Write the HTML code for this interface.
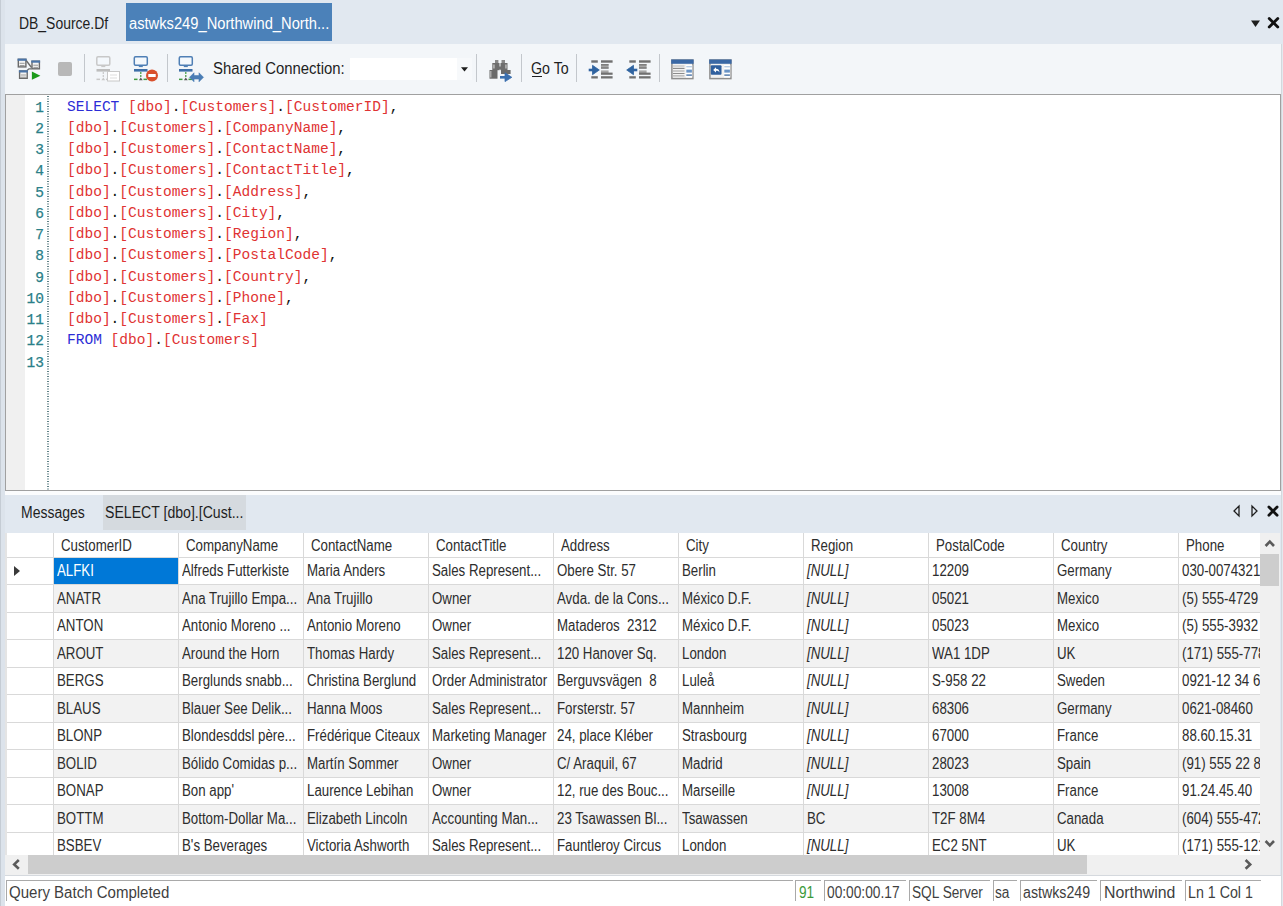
<!DOCTYPE html><html><head><meta charset="utf-8"><style>
*{box-sizing:border-box}
html,body{margin:0;padding:0}
body{width:1283px;height:906px;position:relative;overflow:hidden;background:#E1E8F0;font-family:"Liberation Sans",sans-serif;color:#1E1E1E}
.a{position:absolute}
.t{position:absolute;white-space:nowrap;transform-origin:0 0;line-height:1}
.ln{position:absolute;left:14px;width:30px;text-align:right;font-family:"Liberation Mono",monospace;font-size:14.5px;color:#2A8088;line-height:21.25px;-webkit-text-stroke:0.25px #2A8088}
.code{position:absolute;left:67px;font-family:"Liberation Mono",monospace;font-size:15.5px;color:#DF3333;line-height:21.25px;white-space:pre;transform:scaleX(0.9375);transform-origin:0 0}
.kw{color:#2C2CD6}
.pu{color:#111}
.sep{position:absolute;top:54px;width:1px;height:28px;background:#C3C7CC}
.gt{position:absolute;font-size:16px;line-height:1;white-space:pre;transform-origin:0 0;color:#2D2D2D}
.hl{position:absolute;background:#D9D9D9}
.sb{position:absolute;top:880px;height:21px;border-top:1px solid #A9A9A9;border-left:1px solid #A9A9A9}
.st{position:absolute;font-size:16px;line-height:1;white-space:nowrap;transform-origin:0 0;color:#2A2A2A}
</style></head><body>
<div class="a" style="left:0;top:0;width:1px;height:906px;background:#C5CCD4"></div>
<div class="a" style="left:1px;top:0;width:4px;height:906px;background:#DCE3EB"></div>
<div class="t" style="left:19px;top:16px;font-size:16px;transform:scaleX(0.871)">DB_Source.Df</div>
<div class="a" style="left:126px;top:3px;width:206px;height:38px;background:#4B81B9"></div>
<div class="t" style="left:128.6px;top:16px;font-size:16px;color:#fff;transform:scaleX(0.919)">astwks249_Northwind_North...</div>
<svg class="a" style="left:1248px;top:14px" width="35" height="18" viewBox="0 0 35 18"><path d="M3 6.5 L12 6.5 L7.5 13 Z" fill="#1E1E1E"/><path d="M21.2 4.4 L29.8 13" stroke="#111" stroke-width="2.8" stroke-linecap="round"/><path d="M29.8 4.4 L21.2 13" stroke="#111" stroke-width="2.8" stroke-linecap="round"/></svg>
<div class="a" style="left:5px;top:44px;width:1276px;height:50px;background:#F3F6F9"></div>
<div class="a" style="left:1281px;top:44px;width:1px;height:862px;background:#D3D8DD"></div><div class="a" style="left:1282px;top:44px;width:1px;height:862px;background:#E4E9EE"></div>
<svg class="a" style="left:16px;top:57px" width="26" height="24" viewBox="0 0 26 24"><path d="M10.2 3.5 L15.5 10.5" stroke="#6A6A6A" stroke-width="1.3"/><path d="M11 13.5 L13 11.8 L15.5 11.8" stroke="#6A6A6A" stroke-width="1.3" fill="none"/><rect x="2.3" y="2.3" width="7.6" height="7.6" fill="#F4F4F4" stroke="#6A6A6A" stroke-width="1.4"/><rect x="1.6" y="1.6" width="9" height="2.2" fill="#4A74A8"/><rect x="3.6" y="5.8" width="5" height="1" fill="#9A9A9A"/><rect x="3.6" y="8" width="5" height="1" fill="#9A9A9A"/><rect x="16" y="4.2" width="7.4" height="7.6" fill="#F4F4F4" stroke="#6A6A6A" stroke-width="1.4"/><rect x="15.3" y="3.5" width="8.8" height="2.2" fill="#4A74A8"/><rect x="17.3" y="7.7" width="4.8" height="1" fill="#9A9A9A"/><rect x="17.3" y="9.9" width="4.8" height="1" fill="#9A9A9A"/><rect x="3.6" y="14" width="7.6" height="7.3" fill="#F4F4F4" stroke="#6A6A6A" stroke-width="1.4"/><rect x="2.9" y="13.3" width="9" height="2.2" fill="#4A74A8"/><rect x="4.9" y="17.5" width="5" height="1" fill="#9A9A9A"/><rect x="4.9" y="19.7" width="5" height="1" fill="#9A9A9A"/><path d="M15.9 14.6 L24.4 18.7 L15.9 22.8 Z" fill="#1A9A1A"/></svg>
<div class="a" style="left:58px;top:61.5px;width:14px;height:14.5px;background:#B8B8B8;border-radius:2px"></div>
<div class="sep" style="left:84px"></div>
<svg class="a" style="left:95px;top:56px" width="28" height="27" viewBox="0 0 28 27"><rect x="1.8" y="0.8" width="13" height="8.4" rx="1.2" fill="#F4F8FC" stroke="#C8C8C8" stroke-width="1.5"/><rect x="6.3" y="9.6" width="4" height="1.5" fill="#C8C8C8"/><rect x="1.5" y="13" width="13.5" height="2.6" fill="#BDBDBD"/><rect x="7.7" y="16" width="1.2" height="2" fill="#C8C8C8"/><rect x="7.7" y="19" width="1.2" height="2" fill="#C8C8C8"/><rect x="1.5" y="22.6" width="3.5" height="1.5" fill="#C8C8C8"/><rect x="11" y="22.6" width="3.5" height="1.5" fill="#C8C8C8"/><path d="M6.4 24.2 L8.3 21.4 L10.2 24.2 Z" fill="#C8C8C8"/><rect x="12.5" y="15.5" width="12" height="9.5" fill="#fff" stroke="#C8C8C8"/><line x1="15" y1="19" x2="22" y2="19" stroke="#ddd"/><line x1="15" y1="22" x2="22" y2="22" stroke="#ddd"/></svg>
<svg class="a" style="left:133px;top:56px" width="28" height="27" viewBox="0 0 28 27"><rect x="1.3" y="0.8" width="13" height="8.4" rx="1.2" fill="#F4F8FC" stroke="#4F7FB5" stroke-width="1.5"/><rect x="5.8" y="9.6" width="4" height="1.5" fill="#4F7FB5"/><rect x="1" y="13" width="13.5" height="2.6" fill="#3E6FA8"/><rect x="7.2" y="16" width="1.2" height="2" fill="#3F9B3F"/><rect x="7.2" y="19" width="1.2" height="2" fill="#3F9B3F"/><rect x="1" y="22.6" width="3.5" height="1.5" fill="#3F9B3F"/><rect x="10.5" y="22.6" width="3.5" height="1.5" fill="#3F9B3F"/><path d="M5.9 24.2 L7.8 21.4 L9.7 24.2 Z" fill="#555"/><circle cx="19" cy="19.5" r="6" fill="#D9502C"/><rect x="15.3" y="18" width="7.4" height="3" fill="#fff"/></svg>
<div class="sep" style="left:167px"></div>
<svg class="a" style="left:178px;top:56px" width="28" height="27" viewBox="0 0 28 27"><rect x="1.3" y="0.8" width="13" height="8.4" rx="1.2" fill="#F4F8FC" stroke="#4F7FB5" stroke-width="1.5"/><rect x="5.8" y="9.6" width="4" height="1.5" fill="#4F7FB5"/><rect x="1" y="13" width="13.5" height="2.6" fill="#3E6FA8"/><rect x="7.2" y="16" width="1.2" height="2" fill="#3F9B3F"/><rect x="7.2" y="19" width="1.2" height="2" fill="#3F9B3F"/><rect x="1" y="22.6" width="3.5" height="1.5" fill="#3F9B3F"/><rect x="10.5" y="22.6" width="3.5" height="1.5" fill="#3F9B3F"/><path d="M5.9 24.2 L7.8 21.4 L9.7 24.2 Z" fill="#555"/><path d="M11.5 21.3 L16 16.8 L16 19.6 L21 19.6 L21 16.8 L25.5 21.3 L21 25.8 L21 23 L16 23 L16 25.8 Z" fill="#4A7DB5" stroke="#4A7DB5" stroke-width="0.6" stroke-linejoin="round"/></svg>
<div class="t" style="left:213px;top:61px;font-size:16px;transform:scaleX(0.931)">Shared Connection:</div>
<div class="a" style="left:350px;top:58px;width:122px;height:22px;background:#fff"></div>
<div class="a" style="left:457px;top:58px;width:15px;height:22px;background:#F7F9FB"></div>
<svg class="a" style="left:460px;top:66px" width="9" height="7"><path d="M1 1.3 L8 1.3 L4.5 5.5 Z" fill="#1E1E1E"/></svg>
<div class="sep" style="left:476px"></div>
<svg class="a" style="left:488px;top:59px" width="26" height="24" viewBox="0 0 26 24"><rect x="7" y="1" width="3.4" height="3.2" fill="#888"/><rect x="13.5" y="1" width="3.5" height="3.2" fill="#888"/><rect x="4.3" y="4" width="7.2" height="7.2" fill="#6E6E6E"/><rect x="12.5" y="4" width="7" height="7.2" fill="#6E6E6E"/><rect x="5.3" y="5.5" width="1.3" height="4" fill="#C8C8C8"/><rect x="17.3" y="5.5" width="1.3" height="4" fill="#C8C8C8"/><rect x="9.5" y="7.5" width="4" height="3" fill="#6E6E6E"/><rect x="1.5" y="11" width="8" height="8.7" fill="#6A6A6A"/><rect x="2.2" y="12" width="1.2" height="6.5" fill="#B8B8B8"/><rect x="13" y="11" width="9.6" height="4" fill="#6A6A6A"/><rect x="12" y="17" width="6.5" height="2.6" fill="#3B6FAE"/><path d="M17 13.8 L23.8 18.3 L17 22.6 Z" fill="#3B6FAE" stroke="#3B6FAE" stroke-width="0.8" stroke-linejoin="round"/></svg>
<div class="sep" style="left:521px"></div>
<div class="t" style="left:530.7px;top:61px;font-size:16px;transform:scaleX(0.89)">Go To</div>
<div class="a" style="left:531.5px;top:75.5px;width:10px;height:1.2px;background:#1E1E1E"></div>
<div class="sep" style="left:576px"></div>
<svg class="a" style="left:588px;top:59px" width="26" height="21" viewBox="0 0 26 21"><rect x="3.3" y="1.3" width="6.5" height="2.4" fill="#707070"/><rect x="3.3" y="17.2" width="6.5" height="2.3" fill="#707070"/><rect x="13" y="1.3" width="11.6" height="2.4" fill="#707070"/><rect x="13" y="5.2" width="7.6" height="4.4" fill="#A6A6A6"/><rect x="13" y="5.2" width="7.6" height="1.2" fill="#707070"/><rect x="13" y="8.4" width="7.6" height="1.2" fill="#707070"/><rect x="13" y="11.4" width="7.6" height="3" fill="#A6A6A6"/><rect x="13" y="13.6" width="11.6" height="2.2" fill="#707070"/><rect x="13" y="17.2" width="11.6" height="2.3" fill="#707070"/><path d="M0.7 11 L6 11" stroke="#2F63A0" stroke-width="2.6"/><path d="M4.5 6.3 L11.3 11 L4.5 15.7 Z" fill="#2F63A0" stroke="#2F63A0" stroke-width="0.8" stroke-linejoin="round"/></svg>
<svg class="a" style="left:626px;top:59px" width="26" height="21" viewBox="0 0 26 21"><rect x="3.3" y="1.3" width="6.5" height="2.4" fill="#707070"/><rect x="3.3" y="17.2" width="6.5" height="2.3" fill="#707070"/><rect x="13" y="1.3" width="11.6" height="2.4" fill="#707070"/><rect x="13" y="5.2" width="7.6" height="4.4" fill="#A6A6A6"/><rect x="13" y="5.2" width="7.6" height="1.2" fill="#707070"/><rect x="13" y="8.4" width="7.6" height="1.2" fill="#707070"/><rect x="13" y="11.4" width="7.6" height="3" fill="#A6A6A6"/><rect x="13" y="13.6" width="11.6" height="2.2" fill="#707070"/><rect x="13" y="17.2" width="11.6" height="2.3" fill="#707070"/><path d="M11.3 11 L6 11" stroke="#2F63A0" stroke-width="2.6"/><path d="M7.5 6.3 L0.7 11 L7.5 15.7 Z" fill="#2F63A0" stroke="#2F63A0" stroke-width="0.8" stroke-linejoin="round"/></svg>
<div class="sep" style="left:659px"></div>
<svg class="a" style="left:671px;top:59px" width="24" height="21" viewBox="0 0 24 21"><rect x="0.9" y="1" width="21" height="18.6" fill="#F2F2F2" stroke="#8E8E8E" stroke-width="1.5"/><rect x="0.2" y="0.5" width="22.4" height="4.3" fill="#3A68A5"/><rect x="15" y="6" width="6.3" height="12.5" fill="#FFFFFF"/><rect x="15.3" y="7" width="5.6" height="1.4" fill="#B7CCE4"/><rect x="15.3" y="10.6" width="5.6" height="3" fill="#6A94C6"/><rect x="15.3" y="15.4" width="5.6" height="1.4" fill="#4A74A8"/><rect x="2" y="6" width="11.5" height="2.6" fill="#D6D6D6"/><rect x="2" y="9" width="11.5" height="1" fill="#8C8C8C"/><rect x="2" y="11.5" width="11.5" height="1" fill="#A0A0A0"/><rect x="2" y="14" width="11.5" height="1" fill="#8C8C8C"/><rect x="2" y="16.4" width="11.5" height="1" fill="#A0A0A0"/></svg>
<svg class="a" style="left:709px;top:59px" width="24" height="21" viewBox="0 0 24 21"><rect x="0.9" y="1" width="21" height="18.6" fill="#F2F2F2" stroke="#8E8E8E" stroke-width="1.5"/><rect x="0.2" y="0.5" width="22.4" height="4.3" fill="#3A68A5"/><rect x="15" y="6" width="6.3" height="12.5" fill="#FFFFFF"/><rect x="15.3" y="7" width="5.6" height="1.4" fill="#B7CCE4"/><rect x="15.3" y="10.6" width="5.6" height="3" fill="#6A94C6"/><rect x="15.3" y="15.4" width="5.6" height="1.4" fill="#4A74A8"/><rect x="1.8" y="6.2" width="10.7" height="9.6" rx="1" fill="#2F5F9E"/><path d="M4.2 11 L7 8.2 L7 9.8 C9 9.8 10.3 10.8 10.5 13.5 C9.8 12.2 8.8 11.8 7 11.8 L7 13.6 Z" fill="#fff"/></svg>
<div class="a" style="left:5px;top:94px;width:1276px;height:397px;background:#fff;border:1px solid #A0A0A0"></div>
<div class="a" style="left:6px;top:95px;width:19px;height:395px;background:#F0F0F0"></div>
<div class="a" style="left:47px;top:96px;width:2px;height:394px;background-image:linear-gradient(#5F7F84 0,#5F7F84 1.5px,transparent 1.5px,transparent 2.5px,#B9C9CC 2.5px,#B9C9CC 4px,transparent 4px);background-size:2px 5px"></div>
<div class="ln" style="top:97.50px">1</div>
<div class="ln" style="top:118.75px">2</div>
<div class="ln" style="top:140.00px">3</div>
<div class="ln" style="top:161.25px">4</div>
<div class="ln" style="top:182.50px">5</div>
<div class="ln" style="top:203.75px">6</div>
<div class="ln" style="top:225.00px">7</div>
<div class="ln" style="top:246.25px">8</div>
<div class="ln" style="top:267.50px">9</div>
<div class="ln" style="top:288.75px">10</div>
<div class="ln" style="top:310.00px">11</div>
<div class="ln" style="top:331.25px">12</div>
<div class="ln" style="top:352.50px">13</div>
<div class="code" style="top:96.50px"><span class="kw">SELECT </span>[dbo]<span class="pu">.</span>[Customers]<span class="pu">.</span>[CustomerID]<span class="pu">,</span></div>
<div class="code" style="top:117.75px">[dbo]<span class="pu">.</span>[Customers]<span class="pu">.</span>[CompanyName]<span class="pu">,</span></div>
<div class="code" style="top:139.00px">[dbo]<span class="pu">.</span>[Customers]<span class="pu">.</span>[ContactName]<span class="pu">,</span></div>
<div class="code" style="top:160.25px">[dbo]<span class="pu">.</span>[Customers]<span class="pu">.</span>[ContactTitle]<span class="pu">,</span></div>
<div class="code" style="top:181.50px">[dbo]<span class="pu">.</span>[Customers]<span class="pu">.</span>[Address]<span class="pu">,</span></div>
<div class="code" style="top:202.75px">[dbo]<span class="pu">.</span>[Customers]<span class="pu">.</span>[City]<span class="pu">,</span></div>
<div class="code" style="top:224.00px">[dbo]<span class="pu">.</span>[Customers]<span class="pu">.</span>[Region]<span class="pu">,</span></div>
<div class="code" style="top:245.25px">[dbo]<span class="pu">.</span>[Customers]<span class="pu">.</span>[PostalCode]<span class="pu">,</span></div>
<div class="code" style="top:266.50px">[dbo]<span class="pu">.</span>[Customers]<span class="pu">.</span>[Country]<span class="pu">,</span></div>
<div class="code" style="top:287.75px">[dbo]<span class="pu">.</span>[Customers]<span class="pu">.</span>[Phone]<span class="pu">,</span></div>
<div class="code" style="top:309.00px">[dbo]<span class="pu">.</span>[Customers]<span class="pu">.</span>[Fax]</div>
<div class="code" style="top:330.25px"><span class="kw">FROM </span>[dbo]<span class="pu">.</span>[Customers]</div>
<div class="a" style="left:5px;top:491px;width:1276px;height:4px;background:#FBFCFD"></div>
<div class="a" style="left:5px;top:495px;width:1276px;height:38px;background:#E1E8F0"></div>
<div class="t" style="left:21px;top:505px;font-size:16px;transform:scaleX(0.875)">Messages</div>
<div class="a" style="left:103px;top:495px;width:143px;height:35px;background:#D5DADF"></div>
<div class="t" style="left:104.6px;top:505px;font-size:16px;transform:scaleX(0.881)">SELECT [dbo].[Cust...</div>
<svg class="a" style="left:1230px;top:503px" width="53" height="16" viewBox="0 0 53 16"><path d="M9 3 L9 13 L4 8 Z" fill="none" stroke="#1E1E1E" stroke-width="1.3"/><path d="M22 3 L22 13 L27 8 Z" fill="none" stroke="#1E1E1E" stroke-width="1.3"/><path d="M38.9 4 L47.1 12.2" stroke="#111" stroke-width="2.8" stroke-linecap="round"/><path d="M47.1 4 L38.9 12.2" stroke="#111" stroke-width="2.8" stroke-linecap="round"/></svg>
<div class="a" style="left:5px;top:533px;width:2px;height:322px;background:#E4E4E4"></div>
<div class="a" style="left:7px;top:533px;width:1253px;height:322px;background:#fff;overflow:hidden">
<div class="a" style="left:46px;top:51.50px;width:1207px;height:27.50px;background:#F2F2F2"></div>
<div class="a" style="left:46px;top:106.50px;width:1207px;height:27.50px;background:#F2F2F2"></div>
<div class="a" style="left:46px;top:161.50px;width:1207px;height:27.50px;background:#F2F2F2"></div>
<div class="a" style="left:46px;top:216.50px;width:1207px;height:27.50px;background:#F2F2F2"></div>
<div class="a" style="left:46px;top:271.50px;width:1207px;height:27.50px;background:#F2F2F2"></div>
<div class="a" style="left:47px;top:25.00px;width:124px;height:26.50px;background:#0078D7"></div>
<div class="hl" style="left:0;top:23.50px;width:1253px;height:1px"></div>
<div class="hl" style="left:0;top:51.00px;width:1253px;height:1px"></div>
<div class="hl" style="left:0;top:78.50px;width:1253px;height:1px"></div>
<div class="hl" style="left:0;top:106.00px;width:1253px;height:1px"></div>
<div class="hl" style="left:0;top:133.50px;width:1253px;height:1px"></div>
<div class="hl" style="left:0;top:161.00px;width:1253px;height:1px"></div>
<div class="hl" style="left:0;top:188.50px;width:1253px;height:1px"></div>
<div class="hl" style="left:0;top:216.00px;width:1253px;height:1px"></div>
<div class="hl" style="left:0;top:243.50px;width:1253px;height:1px"></div>
<div class="hl" style="left:0;top:271.00px;width:1253px;height:1px"></div>
<div class="hl" style="left:0;top:298.50px;width:1253px;height:1px"></div>
<div class="hl" style="left:0;top:326.00px;width:1253px;height:1px"></div>
<div class="hl" style="left:46px;top:0;width:1px;height:322px"></div>
<div class="hl" style="left:171px;top:0;width:1px;height:322px"></div>
<div class="hl" style="left:296px;top:0;width:1px;height:322px"></div>
<div class="hl" style="left:421px;top:0;width:1px;height:322px"></div>
<div class="hl" style="left:546px;top:0;width:1px;height:322px"></div>
<div class="hl" style="left:671px;top:0;width:1px;height:322px"></div>
<div class="hl" style="left:796px;top:0;width:1px;height:322px"></div>
<div class="hl" style="left:921px;top:0;width:1px;height:322px"></div>
<div class="hl" style="left:1046px;top:0;width:1px;height:322px"></div>
<div class="hl" style="left:1171px;top:0;width:1px;height:322px"></div>
<div class="gt" style="left:54px;top:4.6px;transform:scaleX(0.830)">CustomerID</div>
<div class="gt" style="left:179px;top:4.6px;transform:scaleX(0.830)">CompanyName</div>
<div class="gt" style="left:304px;top:4.6px;transform:scaleX(0.830)">ContactName</div>
<div class="gt" style="left:429px;top:4.6px;transform:scaleX(0.830)">ContactTitle</div>
<div class="gt" style="left:554px;top:4.6px;transform:scaleX(0.830)">Address</div>
<div class="gt" style="left:679px;top:4.6px;transform:scaleX(0.830)">City</div>
<div class="gt" style="left:804px;top:4.6px;transform:scaleX(0.830)">Region</div>
<div class="gt" style="left:929px;top:4.6px;transform:scaleX(0.830)">PostalCode</div>
<div class="gt" style="left:1054px;top:4.6px;transform:scaleX(0.830)">Country</div>
<div class="gt" style="left:1179px;top:4.6px;transform:scaleX(0.830)">Phone</div>
<div class="gt" style="left:50.3px;top:30.30px;transform:scaleX(0.830);color:#fff;">ALFKI</div>
<div class="gt" style="left:175.3px;top:30.30px;transform:scaleX(0.830);color:#2D2D2D;">Alfreds Futterkiste</div>
<div class="gt" style="left:300.3px;top:30.30px;transform:scaleX(0.830);color:#2D2D2D;">Maria Anders</div>
<div class="gt" style="left:425.3px;top:30.30px;transform:scaleX(0.830);color:#2D2D2D;">Sales Represent...</div>
<div class="gt" style="left:550.3px;top:30.30px;transform:scaleX(0.830);color:#2D2D2D;">Obere Str. 57</div>
<div class="gt" style="left:675.3px;top:30.30px;transform:scaleX(0.830);color:#2D2D2D;">Berlin</div>
<div class="gt" style="left:800.3px;top:30.30px;transform:scaleX(0.830);color:#2D2D2D;font-style:italic;">[NULL]</div>
<div class="gt" style="left:925.3px;top:30.30px;transform:scaleX(0.830);color:#2D2D2D;">12209</div>
<div class="gt" style="left:1050.3px;top:30.30px;transform:scaleX(0.830);color:#2D2D2D;">Germany</div>
<div class="gt" style="left:1175.3px;top:30.30px;transform:scaleX(0.830);color:#2D2D2D;">030-0074321</div>
<div class="gt" style="left:50.3px;top:57.80px;transform:scaleX(0.830);color:#2D2D2D;">ANATR</div>
<div class="gt" style="left:175.3px;top:57.80px;transform:scaleX(0.830);color:#2D2D2D;">Ana Trujillo Empa...</div>
<div class="gt" style="left:300.3px;top:57.80px;transform:scaleX(0.830);color:#2D2D2D;">Ana Trujillo</div>
<div class="gt" style="left:425.3px;top:57.80px;transform:scaleX(0.830);color:#2D2D2D;">Owner</div>
<div class="gt" style="left:550.3px;top:57.80px;transform:scaleX(0.830);color:#2D2D2D;">Avda. de la Cons...</div>
<div class="gt" style="left:675.3px;top:57.80px;transform:scaleX(0.830);color:#2D2D2D;">México D.F.</div>
<div class="gt" style="left:800.3px;top:57.80px;transform:scaleX(0.830);color:#2D2D2D;font-style:italic;">[NULL]</div>
<div class="gt" style="left:925.3px;top:57.80px;transform:scaleX(0.830);color:#2D2D2D;">05021</div>
<div class="gt" style="left:1050.3px;top:57.80px;transform:scaleX(0.830);color:#2D2D2D;">Mexico</div>
<div class="gt" style="left:1175.3px;top:57.80px;transform:scaleX(0.830);color:#2D2D2D;">(5) 555-4729</div>
<div class="gt" style="left:50.3px;top:85.30px;transform:scaleX(0.830);color:#2D2D2D;">ANTON</div>
<div class="gt" style="left:175.3px;top:85.30px;transform:scaleX(0.830);color:#2D2D2D;">Antonio Moreno ...</div>
<div class="gt" style="left:300.3px;top:85.30px;transform:scaleX(0.830);color:#2D2D2D;">Antonio Moreno</div>
<div class="gt" style="left:425.3px;top:85.30px;transform:scaleX(0.830);color:#2D2D2D;">Owner</div>
<div class="gt" style="left:550.3px;top:85.30px;transform:scaleX(0.830);color:#2D2D2D;">Mataderos  2312</div>
<div class="gt" style="left:675.3px;top:85.30px;transform:scaleX(0.830);color:#2D2D2D;">México D.F.</div>
<div class="gt" style="left:800.3px;top:85.30px;transform:scaleX(0.830);color:#2D2D2D;font-style:italic;">[NULL]</div>
<div class="gt" style="left:925.3px;top:85.30px;transform:scaleX(0.830);color:#2D2D2D;">05023</div>
<div class="gt" style="left:1050.3px;top:85.30px;transform:scaleX(0.830);color:#2D2D2D;">Mexico</div>
<div class="gt" style="left:1175.3px;top:85.30px;transform:scaleX(0.830);color:#2D2D2D;">(5) 555-3932</div>
<div class="gt" style="left:50.3px;top:112.80px;transform:scaleX(0.830);color:#2D2D2D;">AROUT</div>
<div class="gt" style="left:175.3px;top:112.80px;transform:scaleX(0.830);color:#2D2D2D;">Around the Horn</div>
<div class="gt" style="left:300.3px;top:112.80px;transform:scaleX(0.830);color:#2D2D2D;">Thomas Hardy</div>
<div class="gt" style="left:425.3px;top:112.80px;transform:scaleX(0.830);color:#2D2D2D;">Sales Represent...</div>
<div class="gt" style="left:550.3px;top:112.80px;transform:scaleX(0.830);color:#2D2D2D;">120 Hanover Sq.</div>
<div class="gt" style="left:675.3px;top:112.80px;transform:scaleX(0.830);color:#2D2D2D;">London</div>
<div class="gt" style="left:800.3px;top:112.80px;transform:scaleX(0.830);color:#2D2D2D;font-style:italic;">[NULL]</div>
<div class="gt" style="left:925.3px;top:112.80px;transform:scaleX(0.830);color:#2D2D2D;">WA1 1DP</div>
<div class="gt" style="left:1050.3px;top:112.80px;transform:scaleX(0.830);color:#2D2D2D;">UK</div>
<div class="gt" style="left:1175.3px;top:112.80px;transform:scaleX(0.830);color:#2D2D2D;">(171) 555-7788</div>
<div class="gt" style="left:50.3px;top:140.30px;transform:scaleX(0.830);color:#2D2D2D;">BERGS</div>
<div class="gt" style="left:175.3px;top:140.30px;transform:scaleX(0.830);color:#2D2D2D;">Berglunds snabb...</div>
<div class="gt" style="left:300.3px;top:140.30px;transform:scaleX(0.830);color:#2D2D2D;">Christina Berglund</div>
<div class="gt" style="left:425.3px;top:140.30px;transform:scaleX(0.830);color:#2D2D2D;">Order Administrator</div>
<div class="gt" style="left:550.3px;top:140.30px;transform:scaleX(0.830);color:#2D2D2D;">Berguvsvägen  8</div>
<div class="gt" style="left:675.3px;top:140.30px;transform:scaleX(0.830);color:#2D2D2D;">Luleå</div>
<div class="gt" style="left:800.3px;top:140.30px;transform:scaleX(0.830);color:#2D2D2D;font-style:italic;">[NULL]</div>
<div class="gt" style="left:925.3px;top:140.30px;transform:scaleX(0.830);color:#2D2D2D;">S-958 22</div>
<div class="gt" style="left:1050.3px;top:140.30px;transform:scaleX(0.830);color:#2D2D2D;">Sweden</div>
<div class="gt" style="left:1175.3px;top:140.30px;transform:scaleX(0.830);color:#2D2D2D;">0921-12 34 65</div>
<div class="gt" style="left:50.3px;top:167.80px;transform:scaleX(0.830);color:#2D2D2D;">BLAUS</div>
<div class="gt" style="left:175.3px;top:167.80px;transform:scaleX(0.830);color:#2D2D2D;">Blauer See Delik...</div>
<div class="gt" style="left:300.3px;top:167.80px;transform:scaleX(0.830);color:#2D2D2D;">Hanna Moos</div>
<div class="gt" style="left:425.3px;top:167.80px;transform:scaleX(0.830);color:#2D2D2D;">Sales Represent...</div>
<div class="gt" style="left:550.3px;top:167.80px;transform:scaleX(0.830);color:#2D2D2D;">Forsterstr. 57</div>
<div class="gt" style="left:675.3px;top:167.80px;transform:scaleX(0.830);color:#2D2D2D;">Mannheim</div>
<div class="gt" style="left:800.3px;top:167.80px;transform:scaleX(0.830);color:#2D2D2D;font-style:italic;">[NULL]</div>
<div class="gt" style="left:925.3px;top:167.80px;transform:scaleX(0.830);color:#2D2D2D;">68306</div>
<div class="gt" style="left:1050.3px;top:167.80px;transform:scaleX(0.830);color:#2D2D2D;">Germany</div>
<div class="gt" style="left:1175.3px;top:167.80px;transform:scaleX(0.830);color:#2D2D2D;">0621-08460</div>
<div class="gt" style="left:50.3px;top:195.30px;transform:scaleX(0.830);color:#2D2D2D;">BLONP</div>
<div class="gt" style="left:175.3px;top:195.30px;transform:scaleX(0.830);color:#2D2D2D;">Blondesddsl père...</div>
<div class="gt" style="left:300.3px;top:195.30px;transform:scaleX(0.830);color:#2D2D2D;">Frédérique Citeaux</div>
<div class="gt" style="left:425.3px;top:195.30px;transform:scaleX(0.830);color:#2D2D2D;">Marketing Manager</div>
<div class="gt" style="left:550.3px;top:195.30px;transform:scaleX(0.830);color:#2D2D2D;">24, place Kléber</div>
<div class="gt" style="left:675.3px;top:195.30px;transform:scaleX(0.830);color:#2D2D2D;">Strasbourg</div>
<div class="gt" style="left:800.3px;top:195.30px;transform:scaleX(0.830);color:#2D2D2D;font-style:italic;">[NULL]</div>
<div class="gt" style="left:925.3px;top:195.30px;transform:scaleX(0.830);color:#2D2D2D;">67000</div>
<div class="gt" style="left:1050.3px;top:195.30px;transform:scaleX(0.830);color:#2D2D2D;">France</div>
<div class="gt" style="left:1175.3px;top:195.30px;transform:scaleX(0.830);color:#2D2D2D;">88.60.15.31</div>
<div class="gt" style="left:50.3px;top:222.80px;transform:scaleX(0.830);color:#2D2D2D;">BOLID</div>
<div class="gt" style="left:175.3px;top:222.80px;transform:scaleX(0.830);color:#2D2D2D;">Bólido Comidas p...</div>
<div class="gt" style="left:300.3px;top:222.80px;transform:scaleX(0.830);color:#2D2D2D;">Martín Sommer</div>
<div class="gt" style="left:425.3px;top:222.80px;transform:scaleX(0.830);color:#2D2D2D;">Owner</div>
<div class="gt" style="left:550.3px;top:222.80px;transform:scaleX(0.830);color:#2D2D2D;">C/ Araquil, 67</div>
<div class="gt" style="left:675.3px;top:222.80px;transform:scaleX(0.830);color:#2D2D2D;">Madrid</div>
<div class="gt" style="left:800.3px;top:222.80px;transform:scaleX(0.830);color:#2D2D2D;font-style:italic;">[NULL]</div>
<div class="gt" style="left:925.3px;top:222.80px;transform:scaleX(0.830);color:#2D2D2D;">28023</div>
<div class="gt" style="left:1050.3px;top:222.80px;transform:scaleX(0.830);color:#2D2D2D;">Spain</div>
<div class="gt" style="left:1175.3px;top:222.80px;transform:scaleX(0.830);color:#2D2D2D;">(91) 555 22 82</div>
<div class="gt" style="left:50.3px;top:250.30px;transform:scaleX(0.830);color:#2D2D2D;">BONAP</div>
<div class="gt" style="left:175.3px;top:250.30px;transform:scaleX(0.830);color:#2D2D2D;">Bon app&#x27;</div>
<div class="gt" style="left:300.3px;top:250.30px;transform:scaleX(0.830);color:#2D2D2D;">Laurence Lebihan</div>
<div class="gt" style="left:425.3px;top:250.30px;transform:scaleX(0.830);color:#2D2D2D;">Owner</div>
<div class="gt" style="left:550.3px;top:250.30px;transform:scaleX(0.830);color:#2D2D2D;">12, rue des Bouc...</div>
<div class="gt" style="left:675.3px;top:250.30px;transform:scaleX(0.830);color:#2D2D2D;">Marseille</div>
<div class="gt" style="left:800.3px;top:250.30px;transform:scaleX(0.830);color:#2D2D2D;font-style:italic;">[NULL]</div>
<div class="gt" style="left:925.3px;top:250.30px;transform:scaleX(0.830);color:#2D2D2D;">13008</div>
<div class="gt" style="left:1050.3px;top:250.30px;transform:scaleX(0.830);color:#2D2D2D;">France</div>
<div class="gt" style="left:1175.3px;top:250.30px;transform:scaleX(0.830);color:#2D2D2D;">91.24.45.40</div>
<div class="gt" style="left:50.3px;top:277.80px;transform:scaleX(0.830);color:#2D2D2D;">BOTTM</div>
<div class="gt" style="left:175.3px;top:277.80px;transform:scaleX(0.830);color:#2D2D2D;">Bottom-Dollar Ma...</div>
<div class="gt" style="left:300.3px;top:277.80px;transform:scaleX(0.830);color:#2D2D2D;">Elizabeth Lincoln</div>
<div class="gt" style="left:425.3px;top:277.80px;transform:scaleX(0.830);color:#2D2D2D;">Accounting Man...</div>
<div class="gt" style="left:550.3px;top:277.80px;transform:scaleX(0.830);color:#2D2D2D;">23 Tsawassen Bl...</div>
<div class="gt" style="left:675.3px;top:277.80px;transform:scaleX(0.830);color:#2D2D2D;">Tsawassen</div>
<div class="gt" style="left:800.3px;top:277.80px;transform:scaleX(0.830);color:#2D2D2D;">BC</div>
<div class="gt" style="left:925.3px;top:277.80px;transform:scaleX(0.830);color:#2D2D2D;">T2F 8M4</div>
<div class="gt" style="left:1050.3px;top:277.80px;transform:scaleX(0.830);color:#2D2D2D;">Canada</div>
<div class="gt" style="left:1175.3px;top:277.80px;transform:scaleX(0.830);color:#2D2D2D;">(604) 555-4729</div>
<div class="gt" style="left:50.3px;top:305.30px;transform:scaleX(0.830);color:#2D2D2D;">BSBEV</div>
<div class="gt" style="left:175.3px;top:305.30px;transform:scaleX(0.830);color:#2D2D2D;">B&#x27;s Beverages</div>
<div class="gt" style="left:300.3px;top:305.30px;transform:scaleX(0.830);color:#2D2D2D;">Victoria Ashworth</div>
<div class="gt" style="left:425.3px;top:305.30px;transform:scaleX(0.830);color:#2D2D2D;">Sales Represent...</div>
<div class="gt" style="left:550.3px;top:305.30px;transform:scaleX(0.830);color:#2D2D2D;">Fauntleroy Circus</div>
<div class="gt" style="left:675.3px;top:305.30px;transform:scaleX(0.830);color:#2D2D2D;">London</div>
<div class="gt" style="left:800.3px;top:305.30px;transform:scaleX(0.830);color:#2D2D2D;font-style:italic;">[NULL]</div>
<div class="gt" style="left:925.3px;top:305.30px;transform:scaleX(0.830);color:#2D2D2D;">EC2 5NT</div>
<div class="gt" style="left:1050.3px;top:305.30px;transform:scaleX(0.830);color:#2D2D2D;">UK</div>
<div class="gt" style="left:1175.3px;top:305.30px;transform:scaleX(0.830);color:#2D2D2D;">(171) 555-1212</div>
<svg class="a" style="left:6px;top:31.5px" width="10" height="12"><path d="M1 1 L7 6 L1 11 Z" fill="#3A3A3A"/></svg>
</div>
<div class="a" style="left:1260px;top:533px;width:20px;height:322px;background:#F0F0F0"></div>
<div class="a" style="left:1260px;top:554px;width:19px;height:32px;background:#CDCDCD"></div>
<svg class="a" style="left:1263px;top:536px" width="14" height="14"><path d="M2.6 10 L6.8 5.6 L11 10" stroke="#5A5A5A" stroke-width="2.6" fill="none"/></svg>
<svg class="a" style="left:1263px;top:836px" width="14" height="14"><path d="M2.6 5 L6.8 9.4 L11 5" stroke="#5A5A5A" stroke-width="2.6" fill="none"/></svg>
<div class="a" style="left:5px;top:855px;width:1275px;height:20px;background:#F0F0F0"></div>
<div class="a" style="left:28px;top:855px;width:1059px;height:19px;background:#CDCDCD"></div>
<svg class="a" style="left:9px;top:857px" width="14" height="14"><path d="M9.8 3 L5.2 7.4 L9.8 11.8" stroke="#5A5A5A" stroke-width="2.6" fill="none"/></svg>
<svg class="a" style="left:1241px;top:857px" width="14" height="14"><path d="M4.6 3 L9.2 7.4 L4.6 11.8" stroke="#5A5A5A" stroke-width="2.6" fill="none"/></svg>
<div class="a" style="left:5px;top:875px;width:1276px;height:31px;background:#FFFFFF;border-top:1px solid #D5D9DE"></div>
<div class="sb" style="left:6px;width:787px"></div>
<div class="st" style="left:9.3px;top:885px;transform:scaleX(0.939);color:#3F3F3F">Query Batch Completed</div>
<div class="sb" style="left:795px;width:26px"></div>
<div class="st" style="left:798.5px;top:885px;transform:scaleX(0.850);color:#3A9A3A">91</div>
<div class="sb" style="left:824px;width:82px"></div>
<div class="st" style="left:826.7px;top:885px;transform:scaleX(0.858);color:#3F3F3F">00:00:00.17</div>
<div class="sb" style="left:909px;width:81px"></div>
<div class="st" style="left:911.5px;top:885px;transform:scaleX(0.854);color:#3F3F3F">SQL Server</div>
<div class="sb" style="left:993px;width:24px"></div>
<div class="st" style="left:995.3px;top:885px;transform:scaleX(0.856);color:#3F3F3F">sa</div>
<div class="sb" style="left:1020px;width:77px"></div>
<div class="st" style="left:1023.4px;top:885px;transform:scaleX(0.888);color:#3F3F3F">astwks249</div>
<div class="sb" style="left:1100px;width:82px"></div>
<div class="st" style="left:1103.6px;top:885px;transform:scaleX(0.990);color:#3F3F3F">Northwind</div>
<div class="sb" style="left:1185px;width:76px"></div>
<div class="st" style="left:1188.4px;top:885px;transform:scaleX(0.890);color:#3F3F3F">Ln 1 Col 1</div>
</body></html>
